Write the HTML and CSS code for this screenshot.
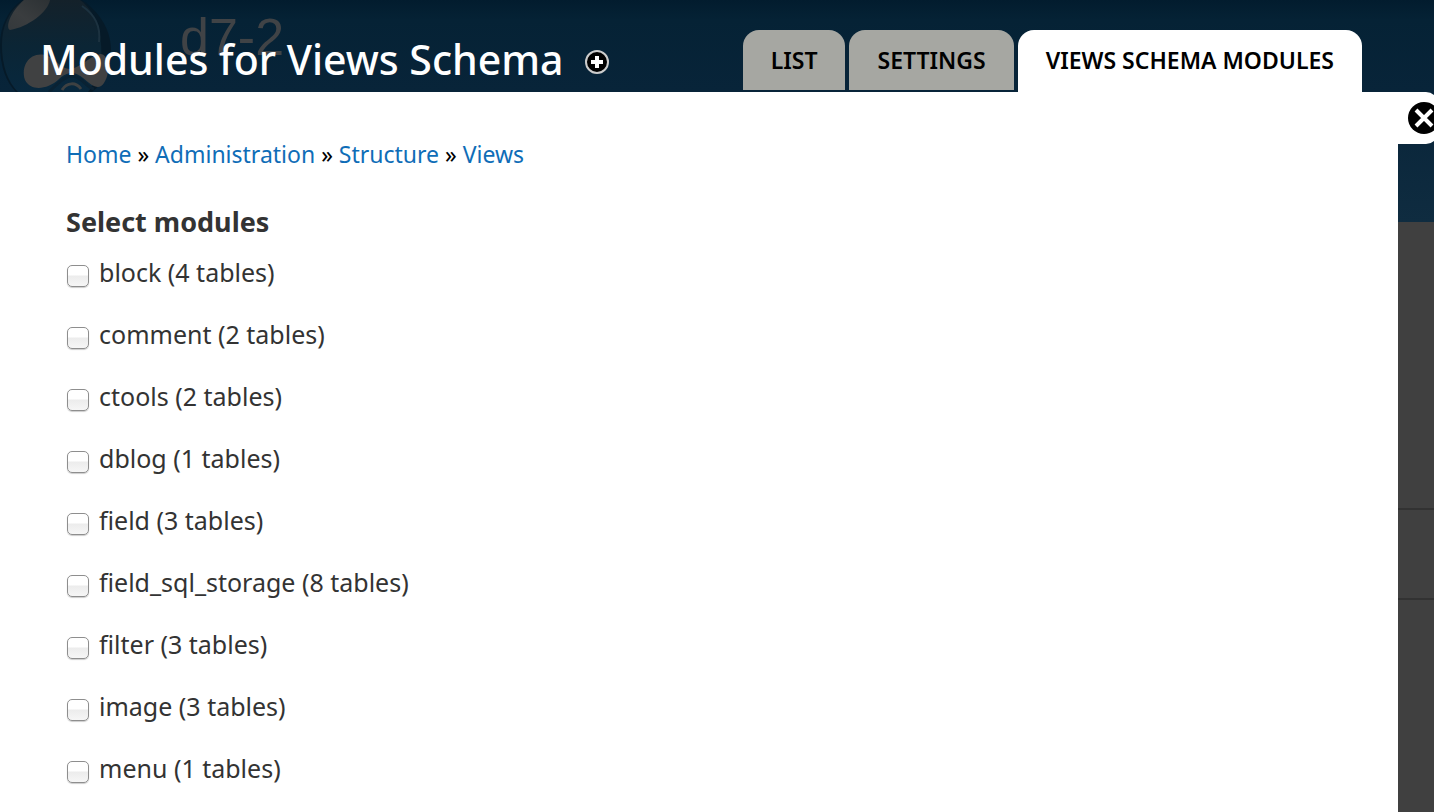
FILE: index.html
```html
<!DOCTYPE html>
<html lang="en">
<head>
  <meta charset="UTF-8">
  <meta name="viewport" content="width=device-width, initial-scale=1.0">
  <title>Modules for Views Schema</title>
  <link rel="stylesheet" href="styles.css">
</head>
<body>

  <!-- dimmed site behind the overlay -->
  <div class="site">
    <div class="site-header">
      <svg class="site-logo" width="112" height="92" viewBox="0 0 112 92" aria-hidden="true">
        <defs>
          <linearGradient id="drop" x1="0" y1="0" x2="0" y2="1">
            <stop offset="0" stop-color="#14212a"/>
            <stop offset="0.5" stop-color="#0b2535"/>
            <stop offset="1" stop-color="#08283e"/>
          </linearGradient>
          <linearGradient id="shine" x1="1" y1="0" x2="0" y2="1">
            <stop offset="0" stop-color="#2c3134"/>
            <stop offset="0.6" stop-color="#3a3d3f"/>
            <stop offset="1" stop-color="#34393c"/>
          </linearGradient>
        </defs>
        <path d="M22 0 C8 10 0 26 0 45 C0 66 6 82 16 92 H92 C105 82 111 66 111 49 C110 27 98 11 82 0 Z" fill="#061a28"/>
        <path d="M24 0 C9 10 2 26 2 45 C2 66 8 82 18 92 H88 C94 84 98 74 101 62 C103 34 96 12 80 0 Z" fill="url(#drop)"/>
        <path d="M82 6 C94 14 101 26 99 42" fill="none" stroke="#1c3240" stroke-width="2"/>
        <path d="M24 0 H50 C48 12 28 27 10 30 C5 28 10 12 24 0 Z" fill="url(#shine)"/>
        <path d="M48 56 C32 50 20 64 25 80 C31 92 48 89 58 80 C68 70 76 72 83 78 C92 86 99 91 104 83 C112 71 108 53 100 54 C90 56 80 68 70 69 C61 69 56 59 48 56 Z" fill="#404142"/>
        <path d="M49 92 C57 84 66 75 73 76 C82 77 86 87 94 89" fill="none" stroke="#0a2233" stroke-width="3"/>
        <path d="M62 90 C67 82 76 82 81 89" fill="none" stroke="#3e4142" stroke-width="3"/>
      </svg>
      <span class="site-name">d7-2</span>
    </div>
    <div class="site-body">
      <div class="site-row"></div>
      <div class="site-row"></div>
    </div>
  </div>

  <div class="overlay">
    <header class="overlay-titlebar">
      <h1 class="overlay-title">Modules for Views Schema</h1>
      <button class="add-shortcut" type="button" aria-label="Add to shortcuts">
        <svg width="26" height="26" viewBox="0 0 26 26" aria-hidden="true">
          <circle cx="13" cy="13" r="11" fill="#000" stroke="#ccc" stroke-width="2"/>
          <path d="M13 7 V19 M7 13 H19" stroke="#fff" stroke-width="4"/>
        </svg>
      </button>
      <nav class="tabs">
        <a class="tab" href="#">LIST</a>
        <a class="tab" href="#">SETTINGS</a>
        <a class="tab active" href="#">VIEWS SCHEMA MODULES</a>
      </nav>
    </header>

    <main class="overlay-content">
      <button class="overlay-close" type="button" aria-label="Close overlay">
        <svg width="34" height="34" viewBox="0 0 34 34" aria-hidden="true">
          <circle cx="17" cy="17" r="16" fill="#000"/>
          <path d="M9 9 L25 25 M25 9 L9 25" stroke="#fff" stroke-width="4"/>
        </svg>
      </button>

      <nav class="breadcrumb">
        <a href="#">Home</a> » <a href="#">Administration</a> » <a href="#">Structure</a> » <a href="#">Views</a>
      </nav>

      <form>
        <fieldset class="modules">
          <legend>Select modules</legend>
          <div class="form-item"><input type="checkbox" id="block"><label for="block">block (4 tables)</label></div>
          <div class="form-item"><input type="checkbox" id="comment"><label for="comment">comment (2 tables)</label></div>
          <div class="form-item"><input type="checkbox" id="ctools"><label for="ctools">ctools (2 tables)</label></div>
          <div class="form-item"><input type="checkbox" id="dblog"><label for="dblog">dblog (1 tables)</label></div>
          <div class="form-item"><input type="checkbox" id="field"><label for="field">field (3 tables)</label></div>
          <div class="form-item"><input type="checkbox" id="field-sql"><label for="field-sql">field_sql_storage (8 tables)</label></div>
          <div class="form-item"><input type="checkbox" id="filter"><label for="filter">filter (3 tables)</label></div>
          <div class="form-item"><input type="checkbox" id="image"><label for="image">image (3 tables)</label></div>
          <div class="form-item"><input type="checkbox" id="menu"><label for="menu">menu (1 tables)</label></div>
        </fieldset>
      </form>
    </main>
  </div>

</body>
</html>
```
FILE: styles.css
```css
* {
  box-sizing: border-box;
}

body {
  margin: 0;
  height: 100vh;
  overflow: hidden;
  position: relative;
  font-family: "Noto Sans", "Lucida Grande", sans-serif;
  font-size: 25px;
  color: #333;
}

/* site behind */
.site {
  position: absolute;
  inset: 0;
  background: #404040;
}

.site-header {
  display: flex;
  align-items: flex-start;
  gap: 68px;
  height: 222px;
  background: linear-gradient(#021c2e 0, #052235 20px, #082439 90px, #0f2c40 222px);
}

.site-name {
  padding-top: 5px;
  font-family: "Liberation Sans", Arial, sans-serif;
  font-size: 52px;
  line-height: 64px;
  color: #404346;
}

.site-body {
  padding-top: 286px;
}

.site-row {
  height: 90px;
  border-top: 2px solid #323232;
}

/* overlay */
.overlay {
  position: relative;
  display: flex;
  flex-direction: column;
  min-height: 100%;
  margin-right: 36px;
}

.overlay-titlebar {
  display: flex;
  align-items: flex-end;
  height: 92px;
  padding: 0 36px 0 40px;
}

.overlay-title {
  margin: 0;
  font-size: 41px;
  line-height: 66px;
  font-weight: 500;
  color: #fff;
  white-space: nowrap;
}

.add-shortcut {
  display: flex;
  margin: 0 0 17px 20px;
  padding: 0;
  border: 0;
  background: none;
  cursor: pointer;
}

.tabs {
  display: flex;
  gap: 4px;
  margin-left: auto;
}

.tab {
  height: 60px;
  padding: 0 28px;
  border-radius: 16px 16px 0 0;
  background: #a6a7a2;
  color: #000;
  font-size: 23px;
  font-weight: 600;
  line-height: 60px;
  text-decoration: none;
  white-space: nowrap;
}

.tab.active {
  height: 62px;
  background: #fff;
}

.overlay-content {
  position: relative;
  flex: 1;
  padding: 44px 66px 0;
  background: #fff;
}

.overlay-close {
  position: absolute;
  top: 0;
  left: 100%;
  display: flex;
  align-items: center;
  width: 40px;
  height: 52px;
  padding: 0 0 0 9px;
  border: 0;
  border-radius: 0 12px 12px 0;
  background: #fff;
  cursor: pointer;
}

.overlay-close svg {
  flex-shrink: 0;
}

.breadcrumb {
  font-size: 23px;
  line-height: 36px;
  color: #000;
}

.breadcrumb a {
  color: #0f6db7;
  text-decoration: none;
}

.modules {
  margin: 32px 0 0;
  padding: 0;
  border: 0;
}

.modules legend {
  padding: 0;
  margin-bottom: 14px;
  font-size: 27px;
  font-weight: bold;
  line-height: 36px;
}

.form-item {
  display: flex;
  align-items: center;
  gap: 10px;
  height: 36px;
  margin-bottom: 26px;
}

.form-item input {
  appearance: none;
  width: 22px;
  height: 22px;
  margin: 8px 0 0 1px;
  border: 1px solid #8e8e8e;
  border-radius: 5px;
  background: linear-gradient(#fff 45%, #ececec 50%, #f6f6f6);
  box-shadow: 0 1px 1px #ccc;
}

.form-item input:checked {
  background: #0f6db7;
}
```
